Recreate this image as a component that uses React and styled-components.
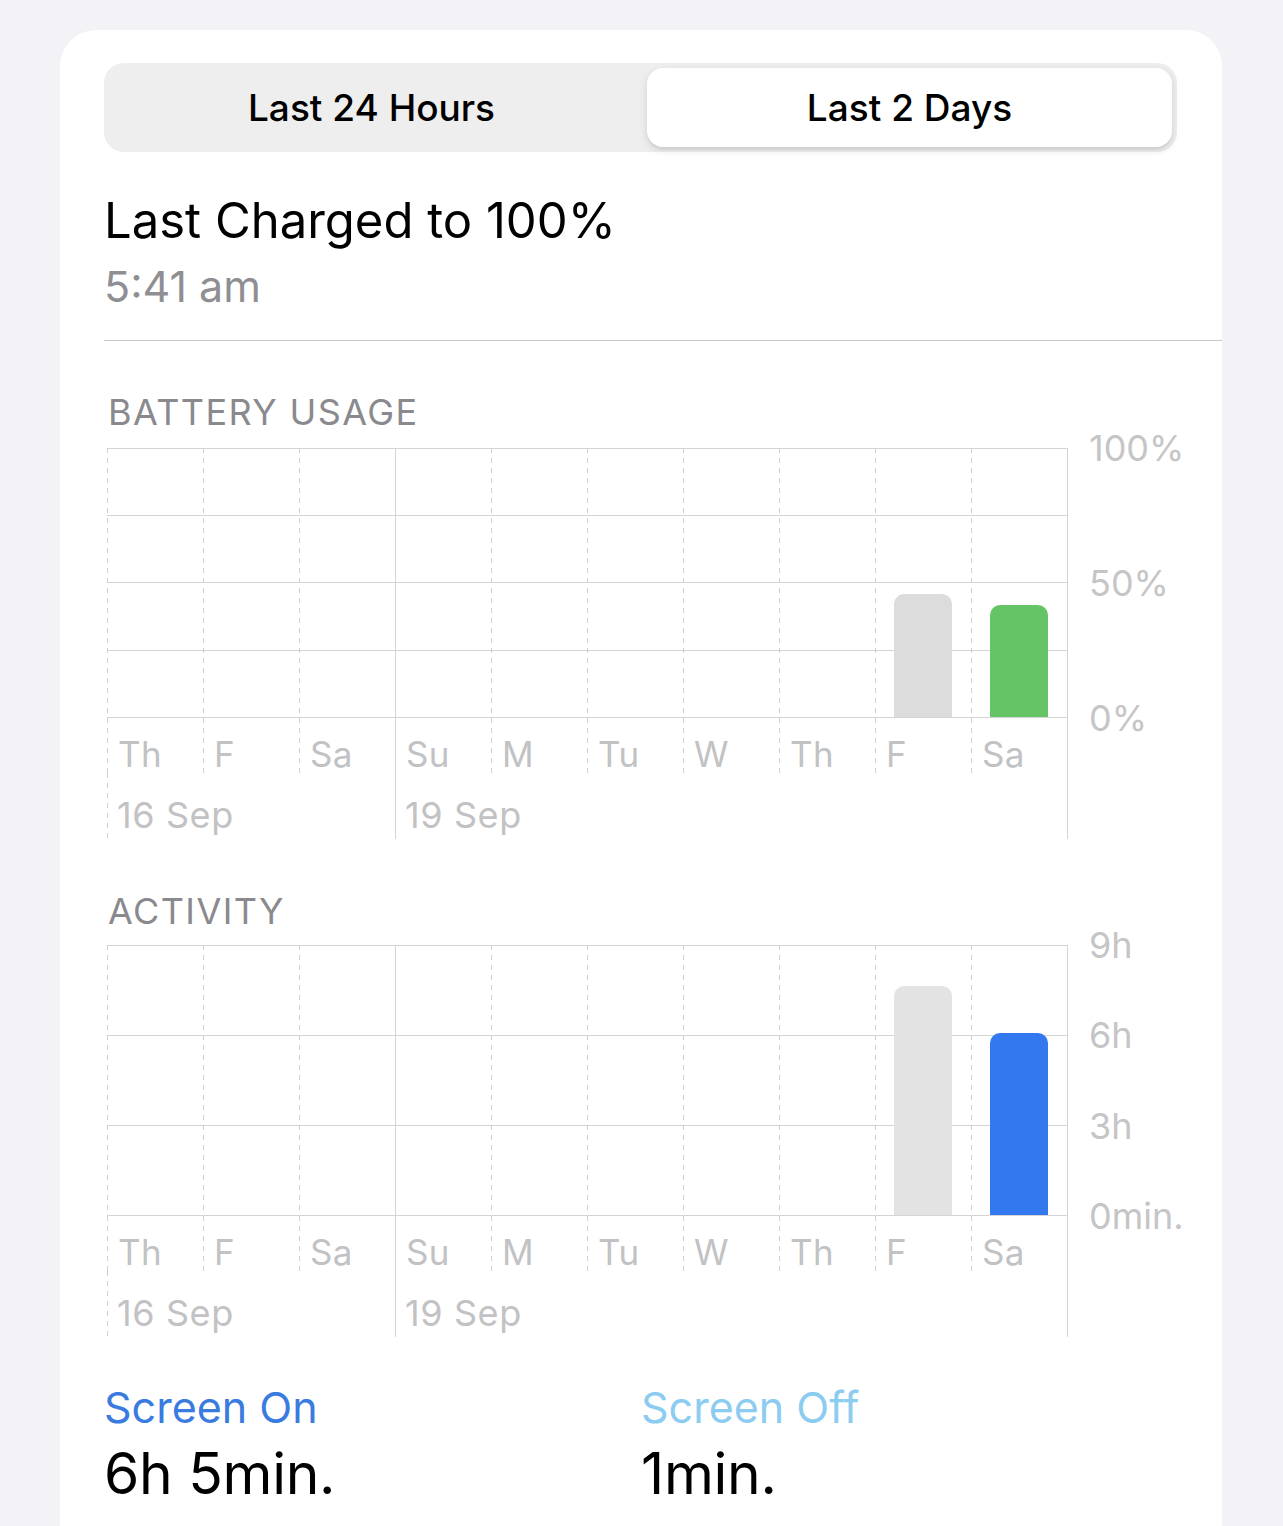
import React from "react";
import styled, { createGlobalStyle } from "styled-components";

const GlobalStyle = createGlobalStyle`
  html, body {
    margin: 0;
    padding: 0;
    background: #f2f2f7;
  }
  body {
    font-family: Inter, "Noto Sans", sans-serif;
    -webkit-font-smoothing: antialiased;
  }
`;

const GRID = "#d4d4d6";
const DASH = "#cfcfd1";

const vline = (solid) =>
  solid
    ? `linear-gradient(${GRID}, ${GRID})`
    : `repeating-linear-gradient(to bottom, ${DASH} 0 5px, transparent 5px 10px)`;

const Page = styled.div`
  height: 1526px;
  overflow: hidden;
  padding: 30px 61px 0 60px;
  box-sizing: border-box;
`;

const Card = styled.div`
  background: #fff;
  border-radius: 36px;
  padding: 33px 0 120px 44px;
  min-height: 1600px;
  box-sizing: border-box;
`;

const Segmented = styled.div`
  display: grid;
  grid-template-columns: 1fr 1fr;
  gap: 13px;
  width: 1073px;
  height: 89px;
  box-sizing: border-box;
  padding: 5px;
  background: #eeeeef;
  border-radius: 20px;
`;

const Segment = styled.div`
  display: flex;
  align-items: center;
  justify-content: center;
  font-size: 37px;
  font-weight: 500;
  color: #000;
  border-radius: 16px;
  background: ${(p) => (p.$active ? "#fff" : "transparent")};
  box-shadow: ${(p) =>
    p.$active ? "0 3px 8px rgba(0,0,0,0.12), 0 3px 1px rgba(0,0,0,0.04)" : "none"};
`;

const Header = styled.div`
  padding: 39px 0 28px 0;
  border-bottom: 1px solid #c8c8cc;
`;

const Title = styled.div`
  font-size: 49px;
  line-height: 60px;
  color: #000;
`;

const Subtitle = styled.div`
  font-size: 43px;
  line-height: 52px;
  color: #8e8e93;
  margin-top: 9px;
`;

const SectionTitle = styled.div`
  font-size: 36px;
  line-height: 44px;
  letter-spacing: 1.4px;
  color: #8a8a8e;
  margin: ${(p) => p.$top}px 0 ${(p) => p.$bottom}px 4px;
`;

const ChartGrid = styled.div`
  display: grid;
  grid-template-columns: 961px 1fr;
  margin-left: 3px;
`;

const Plot = styled.div`
  grid-row: 1;
  grid-column: 1;
  display: flex;
  height: ${(p) => p.$height + 1}px;
  box-sizing: border-box;
  border-right: 1px solid ${GRID};
  border-bottom: 1px solid ${GRID};
  background-image: repeating-linear-gradient(
    to bottom,
    ${GRID} 0 1px,
    transparent 1px ${(p) => p.$height / p.$rows}px
  );
`;

const Column = styled.div`
  flex: 0 0 96px;
  display: flex;
  align-items: flex-end;
  justify-content: center;
  background-image: ${(p) => vline(p.$solid)};
  background-size: 1px 100%;
  background-repeat: no-repeat;
`;

const Bar = styled.div`
  width: 58px;
  border-radius: 10px 10px 0 0;
  background: ${(p) => p.$color};
`;

const YAxis = styled.div`
  grid-row: 1;
  grid-column: 2;
  display: flex;
  flex-direction: column;
  justify-content: space-between;
  margin: -22px 0 -22px 21px;
`;

const Tick = styled.div`
  font-size: 36px;
  line-height: 44px;
  color: #c5c5c7;
`;

const DayRow = styled.div`
  grid-row: 2;
  grid-column: 1;
  display: flex;
  height: 55px;
  border-right: 1px solid ${GRID};
`;

const DayCell = styled.div`
  flex: 0 0 96px;
  box-sizing: border-box;
  padding: 18px 0 0 11px;
  font-size: 35px;
  line-height: 36px;
  letter-spacing: 0.4px;
  color: #c2c2c4;
  background-image: ${(p) => vline(p.$solid)};
  background-size: 1px 100%;
  background-repeat: no-repeat;
`;

const DateRow = styled.div`
  grid-row: 3;
  grid-column: 1;
  display: flex;
  height: 66px;
  border-right: 1px solid ${GRID};
`;

const DateCell = styled.div`
  flex: 0 0 ${(p) => p.$span * 96}px;
  box-sizing: border-box;
  padding: 24px 0 0 10px;
  font-size: 36px;
  line-height: 36px;
  letter-spacing: 0.6px;
  color: #c2c2c4;
  background-image: ${(p) => vline(p.$solid)};
  background-size: 1px 100%;
  background-repeat: no-repeat;
`;

const Summary = styled.div`
  display: grid;
  grid-template-columns: 537px 1fr;
  margin: 45px 0 0 0;
`;

const SummaryLabel = styled.div`
  font-size: 43px;
  line-height: 50px;
  color: ${(p) => p.$color};
`;

const SummaryValue = styled.div`
  font-size: 57px;
  line-height: 64px;
  color: #000;
  margin-top: 10px;
  letter-spacing: -0.3px;
`;

const days = ["Th", "F", "Sa", "Su", "M", "Tu", "W", "Th", "F", "Sa"];

const Chart = ({ height, rows, ticks, bars }) => (
  <ChartGrid>
    <Plot $height={height} $rows={rows}>
      {days.map((d, i) => (
        <Column key={i} $solid={i === 3}>
          {bars[i] && (
            <Bar
              $color={bars[i].color}
              style={{ height: `${bars[i].value * height}px` }}
            />
          )}
        </Column>
      ))}
    </Plot>
    <YAxis>
      {ticks.map((t) => (
        <Tick key={t}>{t}</Tick>
      ))}
    </YAxis>
    <DayRow>
      {days.map((d, i) => (
        <DayCell key={i} $solid={i === 3}>
          {d}
        </DayCell>
      ))}
    </DayRow>
    <DateRow>
      <DateCell $span={3}>16 Sep</DateCell>
      <DateCell $span={7} $solid>
        19 Sep
      </DateCell>
    </DateRow>
  </ChartGrid>
);

const batteryBars = {
  8: { value: 0.457, color: "#dcdcdc" },
  9: { value: 0.416, color: "#65c466" },
};

const activityBars = {
  8: { value: 0.848, color: "#e3e3e3" },
  9: { value: 0.674, color: "#3478f0" },
};

const App = () => (
  <>
    <GlobalStyle />
    <Page>
      <Card>
        <Segmented>
          <Segment>Last 24 Hours</Segment>
          <Segment $active>Last 2 Days</Segment>
        </Segmented>
        <Header>
          <Title>Last Charged to 100%</Title>
          <Subtitle>5:41 am</Subtitle>
        </Header>
        <SectionTitle $top={49} $bottom={14}>
          BATTERY USAGE
        </SectionTitle>
        <Chart
          height={269}
          rows={4}
          ticks={["100%", "50%", "0%"]}
          bars={batteryBars}
        />
        <SectionTitle $top={50} $bottom={12}>
          ACTIVITY
        </SectionTitle>
        <Chart
          height={270}
          rows={3}
          ticks={["9h", "6h", "3h", "0min."]}
          bars={activityBars}
        />
        <Summary>
          <div>
            <SummaryLabel $color="#3a7be0">Screen On</SummaryLabel>
            <SummaryValue>6h 5min.</SummaryValue>
          </div>
          <div>
            <SummaryLabel $color="#8dccf1">Screen Off</SummaryLabel>
            <SummaryValue>1min.</SummaryValue>
          </div>
        </Summary>
      </Card>
    </Page>
  </>
);

export default App;
